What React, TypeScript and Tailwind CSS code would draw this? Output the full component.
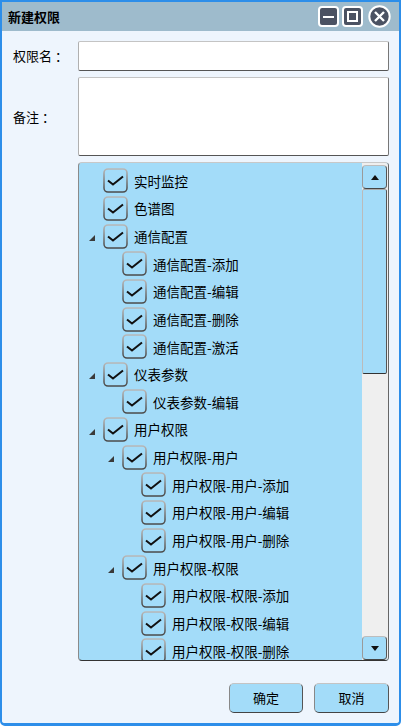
import React from "react";

type Node = { label: string; level: number; expander?: boolean };

const nodes: Node[] = [
  { label: "实时监控", level: 0 },
  { label: "色谱图", level: 0 },
  { label: "通信配置", level: 0, expander: true },
  { label: "通信配置-添加", level: 1 },
  { label: "通信配置-编辑", level: 1 },
  { label: "通信配置-删除", level: 1 },
  { label: "通信配置-激活", level: 1 },
  { label: "仪表参数", level: 0, expander: true },
  { label: "仪表参数-编辑", level: 1 },
  { label: "用户权限", level: 0, expander: true },
  { label: "用户权限-用户", level: 1, expander: true },
  { label: "用户权限-用户-添加", level: 2 },
  { label: "用户权限-用户-编辑", level: 2 },
  { label: "用户权限-用户-删除", level: 2 },
  { label: "用户权限-权限", level: 1, expander: true },
  { label: "用户权限-权限-添加", level: 2 },
  { label: "用户权限-权限-编辑", level: 2 },
  { label: "用户权限-权限-删除", level: 2 },
];

const indent = ["pl-[5px]", "pl-[24px]", "pl-[43px]"];

const font = { fontFamily: '"Noto Sans CJK SC", "Liberation Sans", sans-serif' };

function Check() {
  return (
    <svg width="25" height="25" viewBox="0 0 25 25" className="flex-shrink-0">
      <rect x="1" y="1" width="23" height="23" rx="4" fill="#a3dcf9" stroke="url(#cbStroke)" strokeWidth="1.6" />
      <polyline points="5,12.5 10,16.5 20,8.5" fill="none" stroke="#111" strokeWidth="2" />
    </svg>
  );
}

function Expander({ show }: { show?: boolean }) {
  return (
    <div className="w-[19px] flex-shrink-0 flex justify-start pl-[5px] pt-[4px]">
      {show && (
        <svg width="6" height="6" viewBox="0 0 6 6">
          <polygon points="6,0 6,6 0,6" fill="#3a3a3a" />
        </svg>
      )}
    </div>
  );
}

function Arrow({ up }: { up?: boolean }) {
  return (
    <div className="h-[24px] rounded-[4px] bg-[#a3dcf9] border-[1.5px] border-t-[#bdbdbd] border-l-[#9a9a9a] border-r-[#555] border-b-[#444] flex items-center justify-center flex-shrink-0">
      <svg width="8" height="5" viewBox="0 0 8 5">
        <polygon points={up ? "4,0 8,5 0,5" : "0,0 8,0 4,5"} fill="#111" />
      </svg>
    </div>
  );
}

export default function App() {
  return (
    <div
      className="w-[401px] h-[726px] flex flex-col bg-[#eef5fd] border-2 border-b-[3px] border-[#2d8ee9] rounded-b-[5px] overflow-hidden text-[13px] text-black"
      style={font}
    >
      <svg width="0" height="0" className="absolute">
        <defs>
          <linearGradient id="cbStroke" x1="0" y1="0" x2="0" y2="1">
            <stop offset="0" stopColor="#b8b8b8" />
            <stop offset="1" stopColor="#4a4a4a" />
          </linearGradient>
        </defs>
      </svg>

      {/* Title bar */}
      <header className="h-[29px] flex-shrink-0 bg-[#9ebbcc] flex items-center pl-[6px] pr-[8px]">
        <h1 className="font-bold text-[13px] flex-1">新建权限</h1>
        <div className="flex items-center gap-[3px]">
          <div className="w-[21px] h-[21px] rounded-[4px] bg-[#4b5262] border-2 border-white flex items-center justify-center">
            <div className="w-[11px] h-[2px] bg-white" />
          </div>
          <div className="w-[21px] h-[21px] rounded-[4px] bg-[#4b5262] border-2 border-white flex items-center justify-center">
            <div className="w-[11px] h-[11px] border-2 border-white" />
          </div>
          <svg width="23" height="23" viewBox="0 0 23 23" className="ml-[2px]">
            <circle cx="11.5" cy="11.5" r="10.2" fill="#4b5262" stroke="#fff" strokeWidth="2" />
            <path d="M7 7 L16 16 M16 7 L7 16" stroke="#fff" strokeWidth="2.4" />
          </svg>
        </div>
      </header>

      {/* Body */}
      <div className="flex-1 flex flex-col pl-[11px] pr-[10px] pt-[10px]">
        <div className="flex items-center h-[30px]">
          <label className="w-[65px] flex-shrink-0">权限名 ：</label>
          <div className="flex-1 h-[30px] bg-white rounded-[2px] border border-t-[#c4c4c4] border-l-[#b0b0b0] border-r-[#777] border-b-[#555]" />
        </div>
        <div className="flex items-center h-[79px] mt-[6px]">
          <label className="w-[65px] flex-shrink-0">备注 ：</label>
          <div className="flex-1 h-[79px] bg-white rounded-[2px] border border-t-[#c4c4c4] border-l-[#b0b0b0] border-r-[#777] border-b-[#555]" />
        </div>

        {/* Tree */}
        <div className="ml-[65px] mt-[6px] h-[499px] flex bg-[#a3dcf9] rounded-[4px] border-[1.5px] border-t-[#c8c8c8] border-l-[#8a8a8a] border-r-[#666] border-b-[#333] overflow-hidden">
          <div className="flex-1 pt-[4px] overflow-hidden text-[13.5px]">
            {nodes.map((n, i) => (
              <div key={i} className={`h-[27.65px] flex items-center ${indent[n.level]}`}>
                <Expander show={n.expander} />
                <Check />
                <span className="ml-[6px] whitespace-nowrap">{n.label}</span>
              </div>
            ))}
          </div>
          <div className="w-[26px] flex-shrink-0 flex flex-col pt-[2px] pr-[1px] bg-[#efefef]">
            <Arrow up />
            <div className="h-[185px] bg-[#a3dcf9] rounded-[2px] border-[1.5px] border-t-[#aaa] border-l-[#bbb] border-r-[#555] border-b-[#333]" />
            <div className="flex-1" />
            <Arrow />
          </div>
        </div>

        {/* Footer */}
        <div className="flex justify-end gap-[11px] mt-[22px]">
          <button className="w-[74px] h-[30px] rounded-[5px] bg-[#a3dcf9] border-[1.5px] border-t-[#c4c4c4] border-l-[#888] border-r-[#555] border-b-[#444]">
            确定
          </button>
          <button className="w-[75px] h-[30px] rounded-[5px] bg-[#a3dcf9] border-[1.5px] border-t-[#c4c4c4] border-l-[#888] border-r-[#555] border-b-[#444]">
            取消
          </button>
        </div>
      </div>
    </div>
  );
}
